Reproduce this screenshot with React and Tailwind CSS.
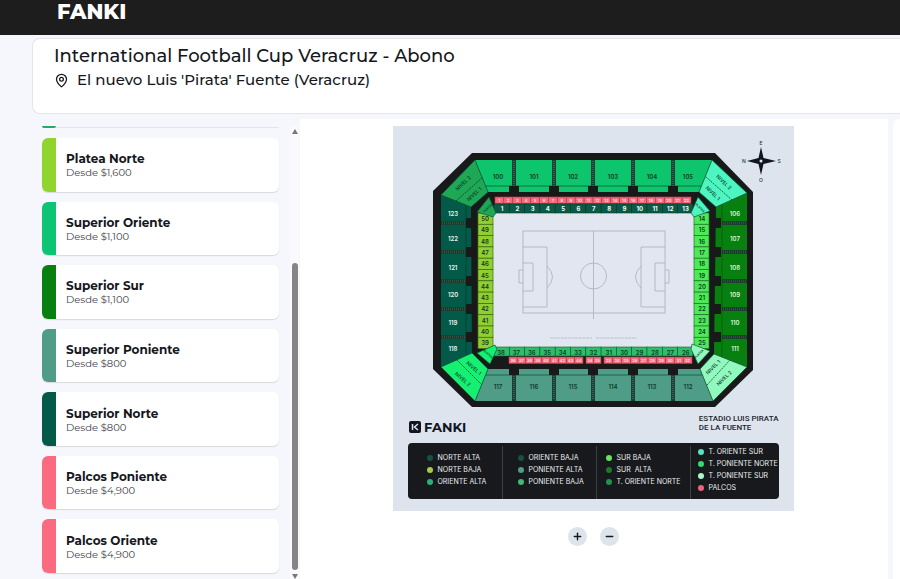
import React from "react";
import { MapPin, Plus, Minus } from "lucide-react";

const zones = [
  { name: "Platea Norte", price: "$1,600", color: "bg-[#8fd42f]" },
  { name: "Superior Oriente", price: "$1,100", color: "bg-[#0cc574]" },
  { name: "Superior Sur", price: "$1,100", color: "bg-[#078010]" },
  { name: "Superior Poniente", price: "$800", color: "bg-[#4f9d86]" },
  { name: "Superior Norte", price: "$800", color: "bg-[#045a48]" },
  { name: "Palcos Poniente", price: "$4,900", color: "bg-[#fb6b80]" },
  { name: "Palcos Oriente", price: "$4,900", color: "bg-[#fb6b80]" },
];

const legend = [
  {
    pad: "pl-[19px]",
    items: [
      ["NORTE ALTA", "bg-[#16523f]"],
      ["NORTE BAJA", "bg-[#a9c94c]"],
      ["ORIENTE ALTA", "bg-[#2fae78]"],
    ],
  },
  {
    pad: "border-l pl-[15px]",
    items: [
      ["ORIENTE BAJA", "bg-[#16523f]"],
      ["PONIENTE ALTA", "bg-[#4f9d86]"],
      ["PONIENTE BAJA", "bg-[#3dbb75]"],
    ],
  },
  {
    pad: "border-l pl-[9px]",
    items: [
      ["SUR BAJA", "bg-[#62e85f]"],
      ["SUR  ALTA", "bg-[#1c7a24]"],
      ["T. ORIENTE NORTE", "bg-[#239150]"],
    ],
  },
  {
    pad: "border-l pl-[7px]",
    items: [
      ["T. ORIENTE SUR", "bg-[#56e3bd]"],
      ["T. PONIENTE NORTE", "bg-[#2fdc6c]"],
      ["T. PONIENTE SUR", "bg-[#a9f5cc]"],
      ["PALCOS", "bg-[#ee637c]"],
    ],
  },
];

const standX = [498, 534, 573, 613, 652, 688];
const aisleX = [514, 554, 593, 633, 673];
const sideY = [213, 238, 267, 294, 322, 348];
const aisleY = [223, 252, 281, 309, 337];
const range = (n) => Array.from({ length: n }, (_, i) => i);

function Label({ x, y, children, fill = "#0b3b2b", size = 6, rotate = 0, weight = 600 }) {
  return (
    <text
      x={x}
      y={y}
      fill={fill}
      fontSize={size}
      fontWeight={weight}
      textAnchor="middle"
      dominantBaseline="central"
      transform={rotate ? `rotate(${rotate} ${x} ${y})` : undefined}
    >
      {children}
    </text>
  );
}

function Boxes({ from, to, y, count, start }) {
  const w = (to - from) / count;
  return range(count).map((i) => (
    <g key={i}>
      <rect x={from + i * w} y={y} width={w} height="6.5" fill="#f26a7c" stroke="#b93a4e" strokeWidth="0.6" />
      <Label x={from + (i + 0.5) * w} y={y + 3.5} size={4} fill="#ffe3e6">
        {start + i}
      </Label>
    </g>
  ));
}

function Stadium() {
  return (
    <svg
      viewBox="393 126 401 288"
      className="block w-full font-['Inter',sans-serif]"
      role="img"
      aria-label="Mapa del estadio"
    >
      <polygon points="472,153 715,153 753,192 753,370 715,407 472,407 433,369 433,191" fill="#181a1a" />

      {/* Upper stands */}
      <polygon points="475,160 712,160 699,192 488,192" fill="#0cc56c" />
      <polygon points="488,369 700,369 713,401 475,401" fill="#4f9d86" />
      <polygon points="441,195 471,207 472,353 441,367" fill="#045a48" />
      <polygon points="747,193 716,207 714,354 747,367" fill="#078010" />
      <path d="M485 186H702M483 375H703" stroke="#0b5b3c" strokeWidth="0.8" />
      <path d="M722 205V357" stroke="#065c0c" strokeWidth="0.8" />
      <path d="M466 206V355" stroke="#033f34" strokeWidth="0.8" />

      {/* Corner stands */}
      <g stroke="#0c5535" strokeWidth="0.7">
        <polygon points="475,160 441,195 471,207 488,192" fill="#1ea755" />
        <polygon points="712,160 747,193 716,207 699,192" fill="#4df5c1" />
        <polygon points="441,367 472,353 488,369 475,401" fill="#15ef72" />
        <polygon points="747,367 714,354 700,369 713,401" fill="#92f9be" />
      </g>
      <path
        d="M456 201L483 177M706 177L732 200M457 360L482 385M707 385L730 360"
        stroke="#0b3b2b"
        strokeWidth="0.8"
        strokeDasharray="2 1"
      />
      <Label x={463} y={183} size={5} rotate={-43} weight={500}>NIVEL 2</Label>
      <Label x={474} y={194} size={5} rotate={-43} weight={500}>NIVEL 1</Label>
      <Label x={724} y={182} size={5} rotate={44} weight={500}>NIVEL 2</Label>
      <Label x={713} y={193} size={5} rotate={44} weight={500}>NIVEL 1</Label>
      <Label x={474} y={368} size={5} rotate={42} weight={500}>NIVEL 1</Label>
      <Label x={463} y={379} size={5} rotate={42} weight={500}>NIVEL 2</Label>
      <Label x={713} y={367} size={5} rotate={-45} weight={500}>NIVEL 1</Label>
      <Label x={724} y={378} size={5} rotate={-45} weight={500}>NIVEL 2</Label>

      {/* Aisles and access tunnels */}
      {aisleX.map((x) => (
        <g key={x}>
          <path d={`M${x} 160V188M${x} 374V401`} stroke="#1b3f34" strokeWidth="4" />
          <path d={`M${x} 161V186M${x} 376V400`} stroke="#4a6a5f" strokeWidth="2" strokeDasharray="0.7 1.3" />
          <rect x={x - 5} y="186" width="10" height="7" fill="#181a1a" />
          <rect x={x - 5} y="368" width="10" height="7" fill="#181a1a" />
        </g>
      ))}
      {aisleY.map((y) => (
        <g key={y}>
          <path d={`M441 ${y}H467M722 ${y}H747`} stroke="#173b2b" strokeWidth="4" />
          <path d={`M442 ${y}H466M723 ${y}H747`} stroke="#3f5a4d" strokeWidth="3" strokeDasharray="0.7 1.3" />
          <rect x="466" y={y - 5} width="7" height="10" fill="#181a1a" />
          <rect x="714" y={y - 5} width="7" height="10" fill="#181a1a" />
        </g>
      ))}
      {standX.map((x, i) => (
        <g key={x}>
          <Label x={x} y={176}>{100 + i}</Label>
          <Label x={x} y={386}>{117 - i}</Label>
        </g>
      ))}
      {sideY.map((y, i) => (
        <g key={y}>
          <Label x={453} y={y} fill="#e6f6ef">{123 - i}</Label>
          <Label x={735} y={y} fill="#d7f7d2">{106 + i}</Label>
        </g>
      ))}

      {/* Pitch */}
      <rect x="493" y="212" width="201" height="136" fill="#e1e6f1" />
      <g fill="none" stroke="#b0b5c0" strokeWidth="0.9">
        <rect x="523" y="231" width="142" height="82" />
        <path d="M593.5 231V319M523 247H547V307H523M523 263H533V291H523M523 270H519V283H523" />
        <path d="M665 247H641V307H665M665 263H655V291H665M665 270H669V283H665" />
        <path d="M547 266Q558 277 547 288M641 266Q630 277 641 288" />
        <circle cx="593.5" cy="276" r="13" />
      </g>
      <path d="M550 338H592M596 338H637" stroke="#cdd4de" strokeWidth="2" strokeDasharray="3 0.6" />

      {/* Lower stands */}
      <Boxes from={495} to={691} y={197} count={22} start={1} />
      <Boxes from={509} to={583} y={357} count={9} start={36} />
      <Boxes from={586} to={601} y={357} count={2} start={34} />
      <Boxes from={604} to={692} y={357} count={10} start={23} />
      {range(13).map((i) => (
        <g key={i}>
          <rect x={494 + i * 15.3} y="204" width="15.3" height="9" fill="#0a5a45" stroke="#073c2e" strokeWidth="0.6" />
          <Label x={502 + i * 15.3} y={208.5} fill="#f1fff8" weight={700}>{1 + i}</Label>
          <rect x={494 + i * 15.3} y="347" width="15.3" height="9" fill="#2cbf66" stroke="#0b6135" strokeWidth="0.6" />
          <Label x={501 + i * 15.4} y={352}>{38 - i}</Label>
        </g>
      ))}
      {range(12).map((i) => (
        <g key={i}>
          <rect x="478" y={213 + i * 11.3} width="15" height="11.3" fill="#91cf30" stroke="#416b14" strokeWidth="0.7" />
          <Label x={485} y={218.5 + i * 11.3}>{50 - i}</Label>
          <rect x="694" y={213 + i * 11.3} width="15" height="11.3" fill="#4fe957" stroke="#217a2a" strokeWidth="0.7" />
          <Label x={702} y={218.5 + i * 11.3}>{14 + i}</Label>
        </g>
      ))}
      <g stroke="#0c5535" strokeWidth="0.7">
        <polygon points="477,212 489,197 496,213 493,217" fill="#1ea755" />
        <polygon points="698,197 710,211 694,217 691,213" fill="#4df5c1" />
        <polygon points="477,353 495,345 497,349 490,364" fill="#15ef72" />
        <polygon points="710,351 692,344 691,349 698,364" fill="#92f9be" />
      </g>
      <Label x={488} y={208} size={3} rotate={-43}>PLATEA</Label>
      <Label x={700} y={208} size={3} rotate={44}>PLATEA</Label>
      <Label x={488} y={354} size={3} rotate={42}>PLATEA</Label>
      <Label x={699} y={354} size={3} rotate={-45}>PLATEA</Label>

      {/* Compass */}
      <polygon points="761,147 763.5,158 776,161 763.5,164 761,175 758.5,164 747,161 758.5,158" fill="#10151f" />
      <circle cx="761" cy="161" r="1.5" fill="#e1e6f1" />
      <Label x={761} y={143} size={5} weight={500}>E</Label>
      <Label x={761} y={180} size={5} weight={500}>O</Label>
      <Label x={744} y={161} size={5} weight={500}>N</Label>
      <Label x={779} y={161} size={5} weight={500}>S</Label>
    </svg>
  );
}

export default function App() {
  return (
    <div className="flex h-screen flex-col overflow-hidden bg-[#f6f7fc] font-['Montserrat','Inter',sans-serif] text-[#15171c]">
      <header className="flex h-[35px] shrink-0 bg-[#1d1d1d] pl-[57px]">
        <svg viewBox="0 0 76 28" className="h-7 w-[76px]" role="img" aria-label="FANKI">
          <text x="0" y="19" fontSize="21" fontWeight="800" fill="#ffffff">FANKI</text>
        </svg>
      </header>

      <section className="ml-8 mt-[3px] h-[76px] shrink-0 rounded-l-lg border border-r-0 border-[#e4e5ea] bg-white pl-[21px] pt-1">
        <h1 className="text-[18px] font-medium leading-[26px]">International Football Cup Veracruz - Abono</h1>
        <p className="flex items-center gap-2 text-[15px] font-medium leading-[22px]">
          <MapPin size={15} strokeWidth={2} />
          El nuevo Luis 'Pirata' Fuente (Veracruz)
        </p>
      </section>

      <div className="flex min-h-0 flex-1 pt-[5px]">
        <aside className="flex w-[300px] shrink-0 pl-[42px] pt-[7px]">
          <div className="flex w-[237px] flex-col pb-[6px]">
            <div className="mb-[10px] h-[2px] shrink-0 border-b border-[#e4e5ec]">
              <div className="h-[2px] w-[14px] rounded-b bg-[#2aa866]" />
            </div>
            <ul className="flex flex-1 flex-col gap-[10px]">
              {zones.map((z) => (
                <li key={z.name} className="flex flex-1">
                  <button className="flex flex-1 overflow-hidden rounded-md bg-white text-left shadow-[0_1px_1px_rgba(40,45,60,0.15)]">
                    <span className={"h-full w-[14px] " + z.color} />
                    <span className="flex flex-col self-center pl-[10px] pt-px">
                      <span className="text-[12px] font-bold leading-[15px]">{z.name}</span>
                      <span className="text-[10px] leading-[13px] text-[#3f424a]">Desde {z.price}</span>
                    </span>
                  </button>
                </li>
              ))}
            </ul>
          </div>
          <div className="ml-[11px] flex w-[9px] flex-col items-center bg-[#fafafd] pt-[3px]">
            <svg viewBox="0 0 6 5" className="h-[5px] w-[6px]"><path d="M3 0L6 5H0Z" fill="#777777" /></svg>
            <div className="mt-[129px] w-[6px] flex-1 rounded-full bg-[#858585]" />
            <svg viewBox="0 0 6 5" className="mt-1 h-[5px] w-[6px]"><path d="M0 0H6L3 5Z" fill="#777777" /></svg>
          </div>
        </aside>

        <main className="flex flex-1 flex-col items-center bg-white pr-[2px] pt-[7px]">
          <div className="flex h-[385px] w-[401px] flex-col bg-[#dde4ee]">
            <Stadium />
            <div className="flex items-start justify-between pl-4 pr-[15px]">
              <svg viewBox="0 0 60 12" className="mt-[7px] h-3 w-[60px] overflow-visible" role="img" aria-label="FANKI">
                <rect width="12" height="12" rx="2" fill="#10151f" />
                <path d="M3.5 3V9M9 3L5.5 6L9 9" fill="none" stroke="#dde4ee" strokeWidth="1.5" />
                <text x="15" y="10.500" fontSize="13" fontWeight="700" fill="#10151f">FANKI</text>
              </svg>
              <p className="font-['Roboto',sans-serif] text-[8px] font-medium leading-[9px] text-[#20242c]">
                ESTADIO LUIS PIRATA
                <br />
                DE LA FUENTE
              </p>
            </div>
            <div className="mx-[15px] mb-3 mt-auto grid h-[56px] shrink-0 grid-cols-[94fr_94fr_94fr_89fr] rounded bg-[#17191c] pb-1 pt-[3px]">
              {legend.map((col) => (
                <ul key={col.pad} className={"flex flex-col justify-center border-[#3c3f43] pb-[5px] " + col.pad}>
                  {col.items.map(([name, color]) => (
                    <li
                      key={name}
                      className="flex h-3 items-center gap-[5px] whitespace-pre font-['Inter',sans-serif] text-[7px] leading-3 text-[#eceef0]"
                    >
                      <span className={"size-[6px] shrink-0 rounded-full " + color} />
                      {name}
                    </li>
                  ))}
                </ul>
              ))}
            </div>
          </div>
          <div className="mt-4 flex gap-[13px]">
            <button aria-label="Acercar" className="flex size-[19px] items-center justify-center rounded-full bg-[#dde4ec]">
              <Plus size={11} strokeWidth={3} />
            </button>
            <button aria-label="Alejar" className="flex size-[19px] items-center justify-center rounded-full bg-[#dde4ec]">
              <Minus size={11} strokeWidth={3} />
            </button>
          </div>
        </main>
        <div className="ml-[5px] w-[7px] shrink-0 rounded-tl-lg bg-white" />
      </div>
    </div>
  );
}
